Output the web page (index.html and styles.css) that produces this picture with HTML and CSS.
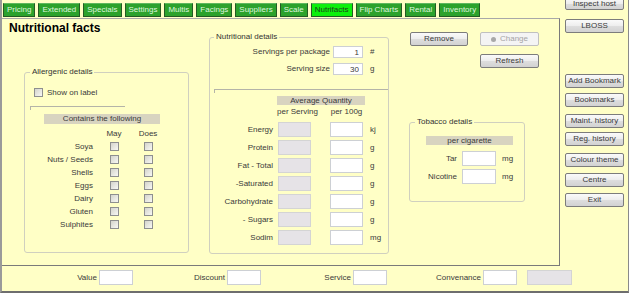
FILE: index.html
```html
<!DOCTYPE html>
<html lang="en">
<head>
  <meta charset="UTF-8" />
  <title>Nutritional facts</title>
  <link rel="stylesheet" href="styles.css">
</head>
<body>
  <div class="app">
    <div class="top">
      <div class="main-col">
        <!-- Tab strip -->
        <div class="tabs">
          <span class="tab">Pricing</span>
          <span class="tab">Extended</span>
          <span class="tab">Specials</span>
          <span class="tab">Settings</span>
          <span class="tab">Multis</span>
          <span class="tab">Facings</span>
          <span class="tab">Suppliers</span>
          <span class="tab">Scale</span>
          <span class="tab active">Nutrifacts</span>
          <span class="tab">Flip Charts</span>
          <span class="tab">Rental</span>
          <span class="tab">Inventory</span>
        </div>

        <div class="panel">
          <div class="col-left">
            <h1>Nutritional facts</h1>
            <!-- Allergens -->
            <fieldset class="group allergen">
              <legend>Allergenic details</legend>
              <label class="check-line"><span class="box"></span>Show on label</label>
              <div class="sep sep-allergen"></div>
              <div class="bar bar-contains">Contains the following</div>
              <div class="allergen-grid">
                <span></span><span class="hd">May</span><span class="hd">Does</span>
                <span class="lbl">Soya</span><span class="box"></span><span class="box"></span>
                <span class="lbl">Nuts / Seeds</span><span class="box"></span><span class="box"></span>
                <span class="lbl">Shells</span><span class="box"></span><span class="box"></span>
                <span class="lbl">Eggs</span><span class="box"></span><span class="box"></span>
                <span class="lbl">Dairy</span><span class="box"></span><span class="box"></span>
                <span class="lbl">Gluten</span><span class="box"></span><span class="box"></span>
                <span class="lbl">Sulphites</span><span class="box"></span><span class="box"></span>
              </div>
            </fieldset>
          </div>

          <!-- Nutrition -->
          <fieldset class="group nutrition">
            <legend>Nutritional details</legend>
            <div class="serv-grid">
              <span class="lbl">Servings per package</span><input class="inp" type="text" value="1"><span class="unit">#</span>
              <span class="lbl">Serving size</span><input class="inp" type="text" value="30"><span class="unit">g</span>
            </div>
            <div class="sep sep-nutrition"></div>
            <div class="bar bar-avg">Average Quantity</div>
            <div class="per-head">
              <span class="per-serv">per Serving</span>
              <span class="per-100">per 100g</span>
            </div>
            <div class="nutri-grid">
              <span class="lbl">Energy</span><span class="inp off"></span><input class="inp" type="text"><span class="unit">kj</span>
              <span class="lbl">Protein</span><span class="inp off"></span><input class="inp" type="text"><span class="unit">g</span>
              <span class="lbl">Fat - Total</span><span class="inp off"></span><input class="inp" type="text"><span class="unit">g</span>
              <span class="lbl">-Saturated</span><span class="inp off"></span><input class="inp" type="text"><span class="unit">g</span>
              <span class="lbl">Carbohydrate</span><span class="inp off"></span><input class="inp" type="text"><span class="unit">g</span>
              <span class="lbl">- Sugars</span><span class="inp off"></span><input class="inp" type="text"><span class="unit">g</span>
              <span class="lbl">Sodim</span><span class="inp off"></span><input class="inp" type="text"><span class="unit">mg</span>
            </div>
          </fieldset>

          <div class="col-right">
            <div class="btn-row">
              <button class="btn btn-remove">Remove</button>
              <button class="btn btn-change" disabled><span class="dot"></span>Change</button>
            </div>
            <button class="btn btn-refresh">Refresh</button>

            <!-- Tobacco -->
            <fieldset class="group tobacco">
              <legend>Tobacco details</legend>
              <div class="bar bar-cig">per cigarette</div>
              <div class="tob-grid">
                <span class="lbl">Tar</span><input class="inp" type="text"><span class="unit">mg</span>
                <span class="lbl">Nicotine</span><input class="inp" type="text"><span class="unit">mg</span>
              </div>
            </fieldset>
          </div>
        </div>
      </div>

      <!-- Side buttons -->
      <div class="side">
        <button class="btn side-btn inspect">Inspect host</button>
        <button class="btn side-btn lboss">LBOSS</button>
        <button class="btn side-btn add-bm">Add Bookmark</button>
        <button class="btn side-btn bm">Bookmarks</button>
        <button class="btn side-btn maint">Maint. history</button>
        <button class="btn side-btn reg">Reg. history</button>
        <button class="btn side-btn theme">Colour theme</button>
        <button class="btn side-btn centre">Centre</button>
        <button class="btn side-btn exit">Exit</button>
      </div>
    </div>

    <!-- Totals bar -->
    <div class="bottom">
      <div class="field f-value"><span>Value</span><input class="inp" type="text"></div>
      <div class="field f-discount"><span>Discount</span><input class="inp" type="text"></div>
      <div class="field f-service"><span>Service</span><input class="inp" type="text"></div>
      <div class="field f-conv"><span>Convenance</span><input class="inp" type="text"></div>
      <div class="field f-total"><span class="inp off total-box"></span></div>
    </div>
  </div>
</body>
</html>
```

FILE: styles.css
```css
body { margin: 0; background: #fff; font-family: "Liberation Sans", Arial, sans-serif; font-size: 8px; line-height: 11px; color: #3a3a3a; }
.app { width: 626px; height: 291px; background: #ffffc6; border-left: 2px solid #9a9a9a; border-right: 1px solid #8a8a8a; border-bottom: 2px solid #6e6e6e; display: flex; flex-direction: column; overflow: hidden; }
.top { display: flex; height: 266px; }
.main-col { width: 558px; display: flex; flex-direction: column; }

/* Tabs */
.tabs { height: 18px; box-sizing: border-box; padding: 3px 0 0 1px; display: flex; gap: 3px; }
.tab { height: 14px; box-sizing: border-box; padding: 0 3px; line-height: 12px; background: #2ca22c; color: #dff7df; border: 1px solid #245a24; border-top-color: #5fb85f; white-space: nowrap; }
.tab.active { background: #0cf00c; color: #1c401c; }

/* Main panel */
.panel { flex: 1; display: flex; align-items: flex-start; border-top: 1px solid #a8a8a8; border-right: 1px solid #7a7a7a; border-bottom: 1px solid #7a7a7a; }
.col-left { width: 207px; box-sizing: border-box; padding-left: 7px; flex-shrink: 0; }
h1 { margin: 2px 0 0; font-size: 12px; line-height: 14px; font-weight: bold; color: #000; }

.group { margin: 0; padding: 0; border: 1px solid #d0d0bf; border-radius: 3px; box-sizing: border-box; min-inline-size: 0; }
.group legend { padding: 0 2px; font-size: 8px; line-height: 10px; color: #333; }

.box { display: inline-block; width: 9px; height: 9px; box-sizing: border-box; border: 1px solid #8e8f8f; background: linear-gradient(135deg, #d4d4cc, #f8f8f4); }
.bar { background: #d8d4c0; height: 9px; line-height: 9px; text-align: center; }
.sep { height: 3px; border-top: 1px solid #b4b4a8; border-left: 1px solid #b4b4a8; }
.lbl { text-align: right; white-space: nowrap; }
.inp { display: block; box-sizing: border-box; height: 15px; margin: 0; padding: 0 3px; border: 1px solid #cdd0d4; background: #fff; font: 8px/11px "Liberation Sans", Arial, sans-serif; color: #3a3a3a; text-align: right; outline: none; }
.inp.off { background: #e6e3e7; border-color: #d4d4d4; }

/* Allergens */
.allergen { margin: 32px 0 0 15px; width: 165px; height: 186px; }
.allergen legend { margin-left: 5px; }
.check-line { display: flex; align-items: center; gap: 4px; margin: 10px 0 0 9px; height: 11px; }
.sep-allergen { margin: 8px 0 0 5px; width: 94px; }
.bar-contains { margin: 4px 0 0 19px; width: 116px; height: 10px; line-height: 10px; }
.allergen-grid { display: grid; grid-template-columns: 63px 42px 26px; grid-auto-rows: 13px; align-items: center; margin: 3px 0 0 5px; }
.allergen-grid .box { justify-self: center; }
.allergen-grid .hd { text-align: center; }

/* Nutrition */
.nutrition { margin-top: 13px; width: 180px; height: 222px; flex-shrink: 0; }
.nutrition legend { margin-left: 4px; }
.serv-grid { display: grid; grid-template-columns: 120px 30px auto; grid-auto-rows: 12px; line-height: 12px; column-gap: 3px; row-gap: 5px; align-items: center; margin-top: 4px; }
.serv-grid .inp { height: 12px; line-height: 10px; }
.unit { padding-left: 4px; }
.sep-nutrition { margin: 14px 0 0 4px; }
.bar-avg { margin: 3px 0 0 67px; width: 88px; }
.per-head { display: flex; height: 12px; line-height: 12px; margin-top: 1px; padding-left: 67px; }
.per-serv { width: 53px; }
.per-100 { width: 33px; text-align: center; }
.nutri-grid { display: grid; grid-template-columns: 63px 33px 47px auto; grid-auto-rows: 15px; column-gap: 5px; row-gap: 3px; align-items: center; margin-top: 4px; }
.nutri-grid .inp:nth-child(4n+3) { width: 33px; justify-self: end; }
.nutri-grid .unit { padding-left: 2px; }

/* Buttons */
.btn { display: block; box-sizing: border-box; height: 14px; padding: 0; border: 1px solid #7c7c7c; border-radius: 2px; background: linear-gradient(#fafafa 0%, #ededed 50%, #dedede 51%, #d2d2d2 100%); font: 8px "Liberation Sans", Arial, sans-serif; line-height: 12px; color: #3a3a3a; text-align: center; white-space: nowrap; }
.btn:disabled { border-color: #c0c0c0; background: #f4f4f4; color: #a4a4a4; }
.dot { display: inline-block; width: 5px; height: 5px; border-radius: 50%; background: #a8a8a8; margin-right: 4px; vertical-align: -1px; }

.col-right { padding-left: 21px; }
.btn-row { display: flex; gap: 12px; margin-top: 13px; }
.btn-remove { width: 58px; }
.btn-change { width: 59px; }
.btn-refresh { width: 59px; margin: 8px 0 0 70px; }

/* Tobacco */
.tobacco { margin: 49px 0 0 -1px; width: 116px; height: 85px; }
.tobacco legend { margin-left: 5px; }
.bar-cig { margin: 9px 0 0 16px; width: 87px; }
.tob-grid { display: grid; grid-template-columns: 47px 34px auto; grid-auto-rows: 15px; column-gap: 5px; row-gap: 3px; align-items: center; margin-top: 6px; }
.tob-grid .unit { padding-left: 1px; }

/* Side buttons */
.side { width: 68px; display: flex; flex-direction: column; }
.side-btn { width: 59px; margin-left: 5px; }
.inspect { margin-top: -3px; height: 13px; line-height: 11px; }
.lboss { margin-top: 9px; }
.add-bm { margin-top: 41px; }
.bm { margin-top: 5px; }
.maint { margin-top: 7px; }
.reg { margin-top: 4px; }
.theme { margin-top: 7px; }
.centre { margin-top: 6px; }
.exit { margin-top: 6px; }

/* Totals bar */
.bottom { height: 25px; box-sizing: border-box; padding-top: 4px; display: grid; grid-template-columns: 131px 128px 126px 130px 55px; }
.field { display: flex; justify-content: flex-end; gap: 2px; line-height: 15px; }
.field .inp { width: 34px; }
.total-box { width: 45px !important; }
```
